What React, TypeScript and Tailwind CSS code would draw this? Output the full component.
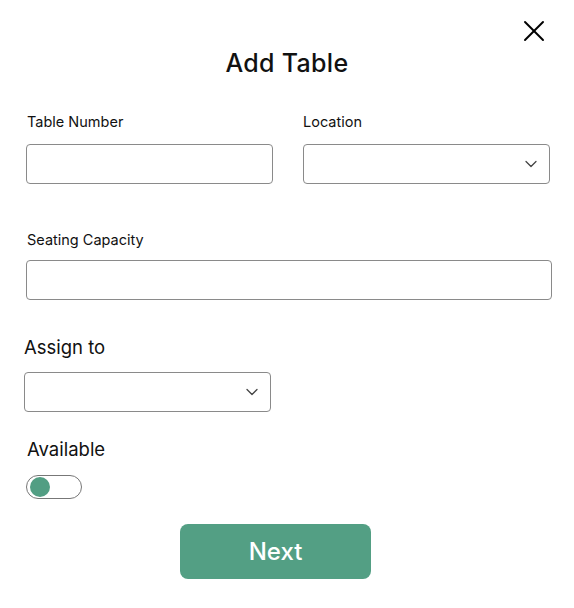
import { X, ChevronDown } from "lucide-react";

const font = { fontFamily: 'Inter, "Open Sans", "Liberation Sans", sans-serif' };

function TextField({ width }: { width: string }) {
  return <div className={`${width} h-[40px] rounded-[4px] border border-[#8a8a8a] bg-white`} />;
}

function SelectField({ width }: { width: string }) {
  return (
    <div
      className={`${width} h-[40px] rounded-[4px] border border-[#8a8a8a] bg-white flex items-center justify-end pr-[8px]`}
    >
      <ChevronDown size={20} strokeWidth={1.5} className="text-[#444]" />
    </div>
  );
}

export default function App() {
  return (
    <div className="w-[574px] h-[608px] bg-white text-[#111]" style={font}>
      <div className="flex justify-end pt-[13px] pr-[22px]">
        <X size={36} strokeWidth={1.3} className="text-black" />
      </div>

      <h1 className="text-center text-[25px] leading-[32px] font-medium -mt-[2px] tracking-[0.3px]">
        Add Table
      </h1>

      <div className="pl-[26px] mt-[33px]">
        <div className="flex gap-[30px]">
          <div className="flex flex-col">
            <label className="text-[14.5px] leading-[20px] pl-[1px]">Table Number</label>
            <div className="mt-[12px]">
              <TextField width="w-[247px]" />
            </div>
          </div>
          <div className="flex flex-col">
            <label className="text-[14.5px] leading-[20px]">Location</label>
            <div className="mt-[12px]">
              <SelectField width="w-[247px]" />
            </div>
          </div>
        </div>

        <div className="mt-[46px] flex flex-col">
          <label className="text-[14.5px] leading-[20px] pl-[1px]">Seating Capacity</label>
          <div className="mt-[10px]">
            <TextField width="w-[526px]" />
          </div>
        </div>
      </div>

      <div className="pl-[24px] mt-[34px] flex flex-col">
        <label className="text-[18.5px] leading-[26px]">Assign to</label>
        <div className="mt-[12px]">
          <SelectField width="w-[247px]" />
        </div>
      </div>

      <div className="pl-[26px] mt-[24px] flex flex-col">
        <label className="text-[18.5px] leading-[26px] pl-[1px]">Available</label>
        <div className="mt-[13px] w-[56px] h-[24px] rounded-full border border-[#777] bg-white flex items-center pl-[3px]">
          <div className="w-[20px] h-[20px] rounded-full bg-[#529e83]" />
        </div>
      </div>

      <div className="pl-[180px] mt-[25px]">
        <button className="w-[191px] h-[55px] rounded-[8px] bg-[#539f84] text-white text-[24px] font-medium">
          Next
        </button>
      </div>
    </div>
  );
}
